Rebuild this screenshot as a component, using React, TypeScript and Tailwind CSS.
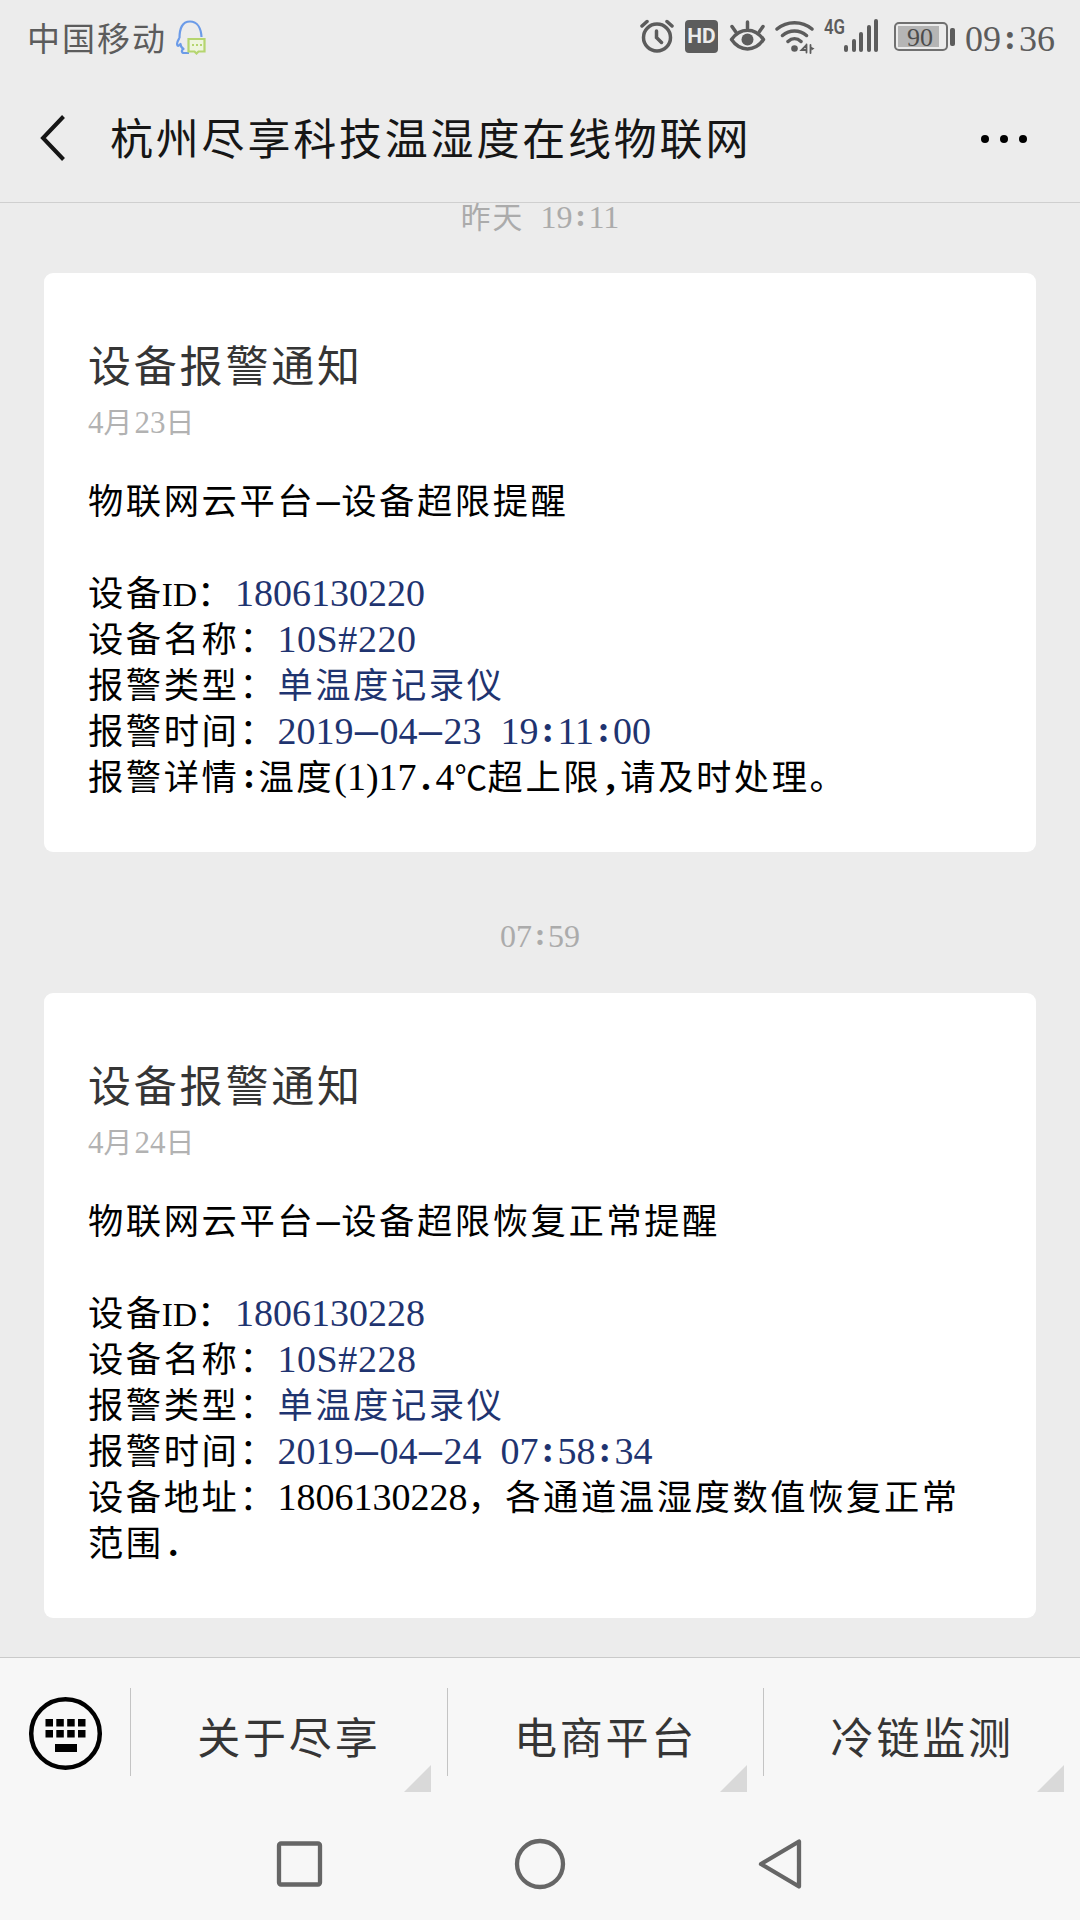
import * as React from 'react';

type Row = {
  readonly label: string;
  readonly value: string;
  readonly plain?: boolean;
};

type Notice = {
  readonly time: string;
  readonly date: string;
  readonly summary: string;
  readonly rows: Row[];
  readonly gap: string;
};

const notices: Notice[] = [
  {
    time: '昨天 19:11',
    date: '4月23日',
    summary: '物联网云平台–设备超限提醒',
    gap: 'h-[70px] pt-0',
    rows: [
      { label: '设备ID：', value: '1806130220' },
      { label: '设备名称：', value: '10S#220' },
      { label: '报警类型：', value: '单温度记录仪' },
      { label: '报警时间：', value: '2019–04–23 19:11:00' },
      { label: '报警详情:', value: '温度(1)17.4℃超上限,请及时处理。', plain: true },
    ],
  },
  {
    time: '07:59',
    date: '4月24日',
    summary: '物联网云平台–设备超限恢复正常提醒',
    gap: 'h-[141px] pt-[70px]',
    rows: [
      { label: '设备ID：', value: '1806130228' },
      { label: '设备名称：', value: '10S#228' },
      { label: '报警类型：', value: '单温度记录仪' },
      { label: '报警时间：', value: '2019–04–24 07:58:34' },
      { label: '设备地址：', value: '1806130228，各通道温湿度数值恢复正常范围.', plain: true },
    ],
  },
];

const menus = ['关于尽享', '电商平台', '冷链监测'];

const latinTweaks: Record<string, string> = {
  'ID': 'text-[0.88em] ml-[-2px]',
  '10S#220': 'tracking-[0.600px]',
  '10S#228': 'tracking-[0.600px]',
};

// Latin punctuation takes a half-width cell, the dash a slightly wider one
function Mixed({ text }: { readonly text: string }) {
  const parts = text.match(/[:.,]|–|℃|[ -~]+?(?=[:.,]|[^ -~]|$)|[^ -~–℃]+/g) ?? [];

  return (
    <>
      {parts.map((part, i) => {
        if (part === ':') {
          return <span key={i} className="inline-block w-[0.5em] text-center align-[0.05em] font-['Liberation_Serif',serif] leading-[0] font-bold">{part}</span>;
        }
        if (/^[.,]$/.test(part)) {
          return <span key={i} className="inline-block w-[0.5em] text-center font-['Liberation_Serif',serif] leading-[0] font-bold">{part}</span>;
        }
        if (part === '–') {
          return <span key={i} className="inline-block w-[26px] text-center font-['Liberation_Sans',sans-serif] text-[42px] leading-[0]">{part}</span>;
        }
        if (part === '℃') {
          return <span key={i} className="inline-block w-[33px] text-[0.86em] leading-[0]">{part}</span>;
        }
        if (/^[ -~]+$/.test(part)) {
          return <span key={i} className={`font-['Liberation_Serif',serif] leading-[0] [word-spacing:0.25em] whitespace-pre ${latinTweaks[part] ?? ''}`}>{part}</span>;
        }
        return <span key={i} className="text-[0.93em] leading-[0] tracking-[0.072em]">{part}</span>;
      })}
    </>
  );
}

function StatusBar() {
  return (
    <div className="flex h-[76px] items-center justify-between pr-[25px] pl-[27px] text-[#5c5c5c]">
      <div className="flex items-center">
        <span className="text-[33px] tracking-[2px]">中国移动</span>
        <svg className="mb-[3px] ml-[8px]" width="32" height="36" viewBox="0 0 32 36" fill="none">
          <path d="M4.500 19C4.500 10 7 2.500 15 2.500c7.500 0 11 7 11.500 15.500M4.500 19c-1.500 2.500-3.500 5-2 7.500 1 1 2-.5 3-1.500 0 2 1.500 4 3 5-2.500 1-2 4 .5 4h5" stroke="#6b9be8" strokeWidth="2.200" strokeLinejoin="round" />
          <path d="M13.500 20h16v12.500h-6l-2 2-2-2h-6z" stroke="#b5d56f" strokeWidth="2.200" fill="#eef5de" />
          <path d="M17 26h2M21 26h2M25 26h2" stroke="#b5d56f" strokeWidth="2" />
        </svg>
      </div>

      <div className="flex items-center">
        {/* Alarm */}
        <svg className="mb-[4px]" width="34" height="36" viewBox="0 0 34 36" fill="none" stroke="#5c5c5c" strokeWidth="3.500" strokeLinecap="round">
          <circle cx="17" cy="19.500" r="13.500" />
          <path d="M16.500 13v6.500l5 5M2 8l5-4.500M32 8l-5-4.500" />
        </svg>
        <div className="mb-[3px] ml-[11px] grid h-[33px] w-[33px] place-items-center rounded-[4px] bg-[#5c5c5c] font-['Roboto',sans-serif] text-[21px] leading-none font-bold text-[#ececec]">HD</div>
        {/* Eye comfort */}
        <svg className="mb-[4px] ml-[11px]" width="37" height="34" viewBox="0 0 37 34" fill="none" stroke="#5c5c5c" strokeWidth="3.500" strokeLinecap="round">
          <path d="M2.500 20.500C11 8 26 8 34.500 20.500 26 33 11 33 2.500 20.500z" strokeLinejoin="round" />
          <path d="M18.500 3v6M3 7.500l3.500 5M34 7.500l-3.500 5" />
          <circle cx="18.500" cy="20.500" r="6" fill="#5c5c5c" stroke="none" />
        </svg>
        {/* Wi-Fi */}
        <svg className="mb-[3px] ml-[9px]" width="40" height="34" viewBox="0 0 40 34" fill="none" stroke="#5c5c5c" strokeWidth="3.500" strokeLinecap="round">
          <path d="M2 9C12 .5 27 .5 37 9M7.500 15.500c7-6 17-6 24 0M13 21.500c4-3.700 9-3.700 13 0" />
          <circle cx="19.500" cy="28.500" r="3.300" fill="#5c5c5c" stroke="none" />
          <path d="M31.500 24.500v8M31.500 25l-5 5h5M35.500 25v8" strokeWidth="1.800" />
          <path d="M35.500 26.500l4 2-3 2z" fill="#5c5c5c" stroke="none" />
        </svg>
        {/* Signal */}
        <div className="relative mb-[5px] ml-[10px] flex h-[33px] w-[53px] items-end justify-end gap-[3.500px]">
          <span className="absolute -top-[2px] left-[-1px] origin-left scale-x-[0.8] font-['Roboto',sans-serif] text-[21px] leading-none font-semibold">4G</span>
          <i className="h-[7px] w-[4px] rounded-full bg-[#5c5c5c]" />
          <i className="h-[13px] w-[4px] rounded-full bg-[#5c5c5c]" />
          <i className="h-[20px] w-[4px] rounded-full bg-[#5c5c5c]" />
          <i className="h-[27px] w-[4px] rounded-full bg-[#5c5c5c]" />
          <i className="h-[33px] w-[4px] rounded-full bg-[#5c5c5c]" />
        </div>
        {/* Battery */}
        <div className="mb-[3px] ml-[16px] flex items-center gap-[2px]">
          <div className="h-[29px] w-[54px] rounded-[5px] border-2 border-[#707070] p-[2px]">
            <div className="h-full w-[41px] bg-[#b5b5b5] pl-[9px] font-['Liberation_Serif',serif] text-[26px] leading-[24px] text-[#4c4c4c]">90</div>
          </div>
          <div className="h-[18px] w-[5px] rounded-[2px] bg-[#5c5c5c]" />
        </div>
        <span className="mb-[6px] ml-[10px] text-[36px] leading-[50px]"><Mixed text="09:36" /></span>
      </div>
    </div>
  );
}

function NoticeCard({ date, summary, rows }: Notice) {
  return (
    <section className="mx-[44px] rounded-[9px] bg-white px-[44px] pt-[58px] pb-[55px]">
      <h2 className="h-[68px] text-[43px] leading-[64px] tracking-[2.800px] text-[#353535]">设备报警通知</h2>
      <div className="mb-[34px] h-[42px] text-[31px] leading-[42px] text-[#b2b2b2]"><Mixed text={date} /></div>
      <div className="text-[38px] leading-[46px] text-black">
        <p className="mb-[46px] h-[46px]"><Mixed text={summary} /></p>
        {rows.map(row => (
          <p key={row.label}>
            <Mixed text={row.label} />
            <span className={row.plain ? '' : 'text-[#1f3470]'}><Mixed text={row.value} /></span>
          </p>
        ))}
      </div>
    </section>
  );
}

export default function App() {
  return (
    <div className="flex h-[1920px] w-[1080px] flex-col overflow-hidden bg-[#ececec] font-['Noto_Sans_CJK_SC',sans-serif]">
      <StatusBar />

      <header className="flex h-[127px] items-center border-b border-[#cfcfcf] pr-[53px] pl-[40px] text-[#161616]">
        <svg className="mb-[3px]" width="26" height="46" viewBox="0 0 26 46" fill="none" stroke="#161616" strokeWidth="4">
          <path d="M23.500 1.500L3 23l20.500 21.500" />
        </svg>
        <h1 className="mb-[5px] ml-[44px] flex-1 text-[43px] tracking-[2.800px]">杭州尽享科技温湿度在线物联网</h1>
        <div className="flex gap-[11px]">
          <i className="h-[8px] w-[8px] rounded-full bg-black" />
          <i className="h-[8px] w-[8px] rounded-full bg-black" />
          <i className="h-[8px] w-[8px] rounded-full bg-black" />
        </div>
      </header>

      <main className="h-[1454px]">
        {notices.map(notice => (
          <React.Fragment key={notice.time}>
            <div className={`text-center text-[32px] leading-[23px] text-[#ababab] ${notice.gap}`}><Mixed text={notice.time} /></div>
            <NoticeCard {...notice} />
          </React.Fragment>
        ))}
      </main>

      <footer className="flex-1 border-t border-[#cacaca] bg-[#f7f7f7]">
        <div className="flex h-[152px] pt-[30px]">
          <div className="h-[88px] w-[130px] shrink-0 pt-[8px] pl-[28px]">
            <svg width="75" height="75" viewBox="0 0 75 75">
              <circle cx="37.500" cy="37.500" r="34.300" fill="none" stroke="#000" strokeWidth="4.500" />
              {[17.5, 28.3, 39.2, 50].map(x => (
                <React.Fragment key={x}>
                  <rect x={x} y="23" width="7.500" height="7.500" />
                  <rect x={x} y="34" width="7.500" height="7.500" />
                </React.Fragment>
              ))}
              <rect x="27" y="48" width="22" height="8" />
            </svg>
          </div>
          {menus.map(menu => (
            <div key={menu} className="relative grid h-[88px] w-[316.700px] shrink-0 place-items-center border-l border-[#c4c4c4] pt-[6px] text-[43px] tracking-[2.800px] text-[#353535]">
              {menu}
              <svg className="absolute right-[16px] bottom-[-16px]" width="27" height="27" viewBox="0 0 28 28">
                <path d="M28 0v28H0z" fill="#d9d9d9" />
              </svg>
            </div>
          ))}
        </div>

        <nav className="flex h-[108px] items-center justify-center gap-[191px]">
          <svg width="47" height="52" viewBox="0 0 47 52" fill="none" stroke="#666" strokeWidth="4.300">
            <rect x="3" y="5.500" width="41" height="41" rx="2" />
          </svg>
          <svg width="52" height="52" viewBox="0 0 52 52" fill="none" stroke="#666" strokeWidth="4.300">
            <circle cx="26" cy="26" r="23" />
          </svg>
          <svg width="47" height="52" viewBox="0 0 47 52" fill="none" stroke="#666" strokeWidth="4.300" strokeLinejoin="round">
            <path d="M42 3.500v45L4 26z" />
          </svg>
        </nav>
      </footer>
    </div>
  );
}
